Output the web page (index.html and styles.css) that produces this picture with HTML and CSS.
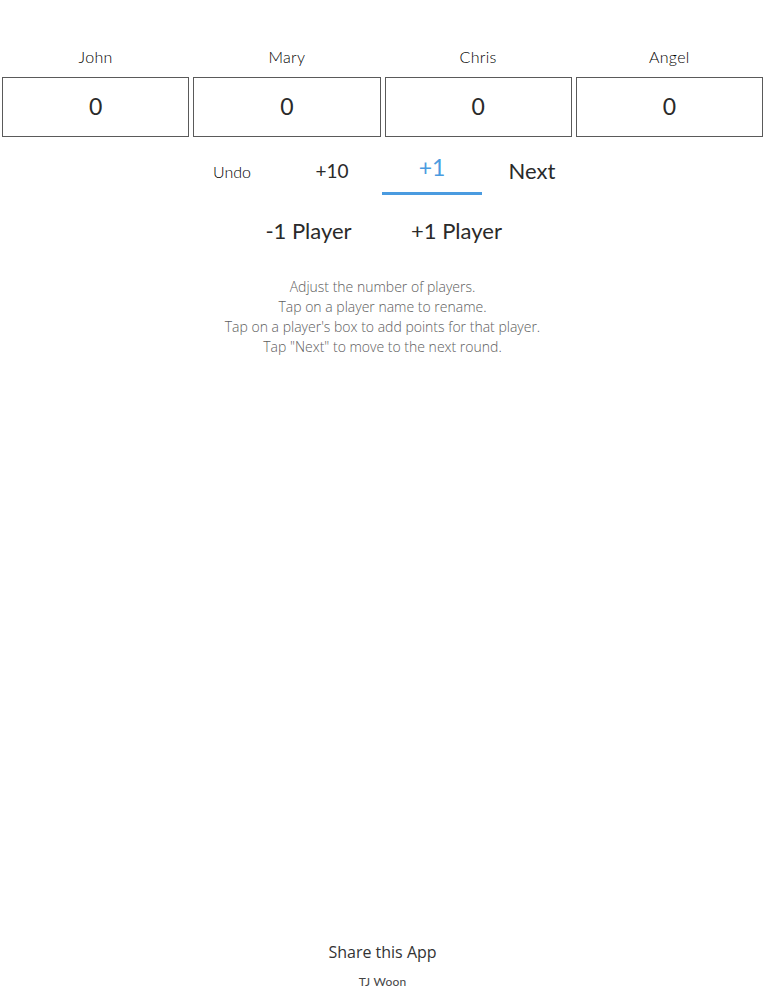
FILE: index.html
```html
<!DOCTYPE html>
<html>
<head>
<meta charset="utf-8">
<link rel="stylesheet" href="styles.css">
</head>
<body>
<div class="page">
  <div class="players">
    <div class="player"><div class="name">John</div><div class="box">0</div></div>
    <div class="player"><div class="name">Mary</div><div class="box">0</div></div>
    <div class="player"><div class="name">Chris</div><div class="box">0</div></div>
    <div class="player"><div class="name">Angel</div><div class="box">0</div></div>
  </div>
  <div class="tabs">
    <div class="tab undo">Undo</div>
    <div class="tab ten">+10</div>
    <div class="tab one active">+1</div>
    <div class="tab next">Next</div>
  </div>
  <div class="playerbtns">
    <div class="pbtn">-1 Player</div>
    <div class="pbtn">+1 Player</div>
  </div>
  <div class="help">
    <div>Adjust the number of players.</div>
    <div>Tap on a player name to rename.</div>
    <div>Tap on a player's box to add points for that player.</div>
    <div>Tap "Next" to move to the next round.</div>
  </div>
  <div class="spacer"></div>
  <div class="footer">
    <div class="share">Share this App</div>
    <div class="author">TJ Woon</div>
  </div>
</div>
</body>
</html>
```

FILE: styles.css
```css
html, body {
  margin: 0;
  padding: 0;
  background: #ffffff;
}
.page {
  width: 765px;
  height: 1000px;
  display: flex;
  flex-direction: column;
  font-family: "Lato", "Liberation Sans", sans-serif;
  color: #2a2a2a;
}
.players {
  display: grid;
  grid-template-columns: repeat(4, 1fr);
  padding-top: 47px;
}
.player {
  display: flex;
  flex-direction: column;
  align-items: stretch;
}
.name {
  text-align: center;
  font-size: 16px;
  font-weight: 300;
  letter-spacing: 0.3px;
  line-height: 20px;
  color: #000;
  height: 20px;
  margin-bottom: 10px;
}
.box {
  margin: 0 2px;
  height: 56px;
  padding-bottom: 2px;
  border: 1.5px solid #5a5a5a;
  display: flex;
  align-items: center;
  justify-content: center;
  font-size: 23px;
  color: #2a2a2a;
}
.tabs {
  display: flex;
  justify-content: center;
  margin-top: 13px;
  margin-left: -1px;
}
.tab {
  width: 100px;
  height: 45px;
  display: flex;
  align-items: center;
  justify-content: center;
  box-sizing: border-box;
  color: #2a2a2a;
}
.undo { font-size: 16px; font-weight: 300; color: #000; padding-bottom: 2px; }
.ten { font-size: 19px; padding-bottom: 4px; }
.one {
  font-size: 23px;
  color: #4a9be0;
  border-bottom: 3px solid #4a9be0;
  padding-bottom: 9px;
}
.next { font-size: 22px; padding-bottom: 4px; }
.playerbtns {
  display: flex;
  justify-content: center;
  margin-top: 21px;
}
.pbtn {
  width: 148px;
  text-align: center;
  font-size: 22px;
  line-height: 30px;
  color: #2a2a2a;
}
.help {
  margin-top: 31px;
  text-align: center;
  font-family: "Open Sans", "Liberation Sans", sans-serif;
  font-weight: 300;
  font-size: 14px;
  line-height: 20px;
  color: #5e5e5e;
}
.spacer { flex: 1; }
.footer {
  text-align: center;
  padding-bottom: 10px;
}
.share {
  font-family: "Open Sans", "Liberation Sans", sans-serif;
  font-size: 16px;
  line-height: 24px;
  color: #333;
}
.author {
  margin-top: 10px;
  font-size: 12px;
  letter-spacing: 0.2px;
  line-height: 16px;
  color: #444;
}
```
